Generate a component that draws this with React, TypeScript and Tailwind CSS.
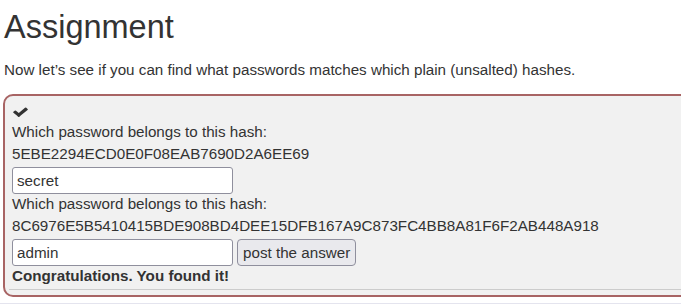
import React from 'react';

const CheckIcon: React.FC = () => (
  <svg viewBox="0 0 1792 1792" className="w-[17px] h-[14px]" fill="#333" preserveAspectRatio="none">
    <path d="M1671 566q0 40-28 68l-724 724-136 136q-28 28-68 28t-68-28l-136-136-362-362q-28-28-28-68t28-68l136-136q28-28 68-28t68 28l294 295 656-657q28-28 68-28t68 28l136 136q28 28 28 68z" />
  </svg>
);

const HashQuestion: React.FC<{ hash: string; value: string; button?: boolean }> = ({ hash, value, button }) => (
  <div>
    <div className="leading-[22px]">Which password belongs to this hash:</div>
    <div className="leading-[22px]">{hash}</div>
    <div className="flex items-center gap-[4px] mt-[2px] -mb-px">
      <input
        readOnly
        value={value}
        className="w-[221px] h-[27px] px-[4px] bg-white border border-[#8f8f9d] rounded-[3px] text-[#333] outline-none"
        style={{ fontFamily: 'inherit', fontSize: 'inherit' }}
      />
      {button && (
        <button className="h-[27px] px-[5px] bg-[#e9e9ed] border border-[#8f8f9d] rounded-[4px] text-[#333] leading-none">
          post the answer
        </button>
      )}
    </div>
  </div>
);

export default function App() {
  return (
    <div
      className="w-[681px] h-[305px] overflow-hidden bg-white text-[#333] text-[15.2px]"
      style={{ fontFamily: '"Liberation Sans", Arial, Helvetica, sans-serif' }}
    >
      <div className="pl-[4px] pt-[9px]">
        <h1 className="text-[32.5px] leading-[36px] font-normal">Assignment</h1>
        <p className="mt-[14px] leading-[22px]">
          Now let’s see if you can find what passwords matches which plain (unsalted) hashes.
        </p>
        <div className="mt-[13px] -ml-px w-[720px] bg-[#f1f1f1] border-2 border-[#a86464] rounded-[10px] pl-[7px] pt-[3px]">
          <div className="h-[22px] flex items-center pt-[4px]">
            <CheckIcon />
          </div>
          <HashQuestion hash="5EBE2294ECD0E0F08EAB7690D2A6EE69" value="secret" />
          <HashQuestion
            hash="8C6976E5B5410415BDE908BD4DEE15DFB167A9C873FC4BB8A81F6F2AB448A918"
            value="admin"
            button
          />
          <div className="leading-[22px] font-bold">Congratulations. You found it!</div>
          <div className="mt-[2px] -ml-[3px] border-t border-[#cccccc] h-[6px]" />
        </div>
        <div className="mt-[6px] -ml-[4px] border-t border-[#e4e4ee] h-[4px]" />
      </div>
    </div>
  );
}
